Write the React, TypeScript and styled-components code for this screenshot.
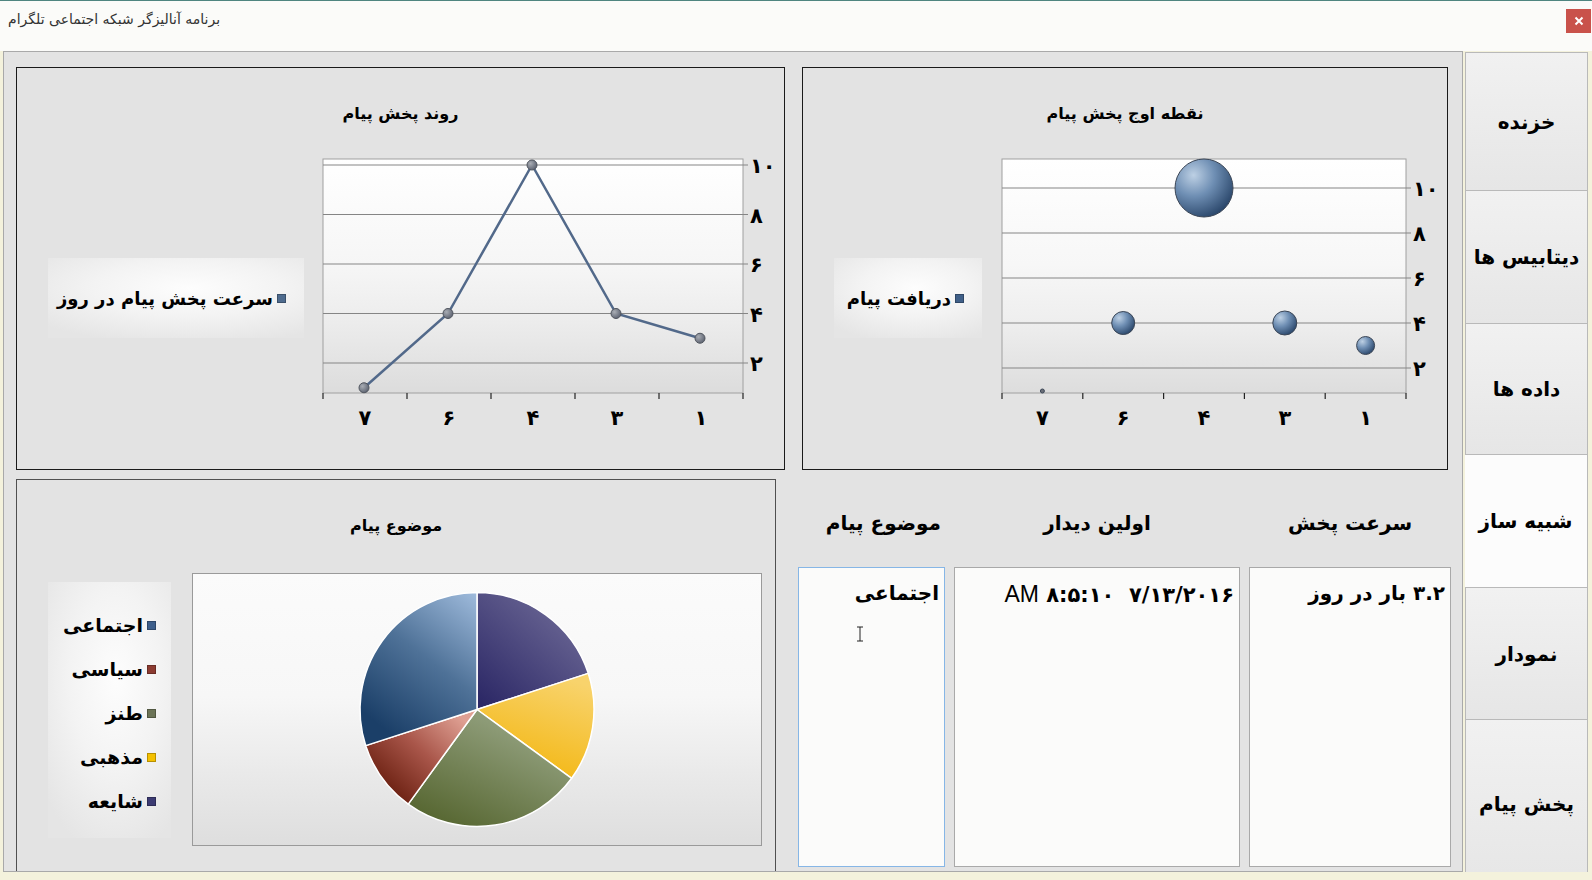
import React from "react";
import styled, { createGlobalStyle } from "styled-components";

const FA = `"DejaVu Sans", "Noto Sans", sans-serif`;

const Global = createGlobalStyle`
  html, body { margin: 0; padding: 0; width: 1592px; height: 880px; overflow: hidden; background: #f4f2dc; }
  #root { width: 1592px; height: 880px; }
`;

const Window = styled.div`
  width: 1592px;
  height: 880px;
  box-sizing: border-box;
  display: flex;
  flex-direction: column;
  background: #f4f2dc;
  border-top: 1px solid #4f8580;
`;

const TitleBar = styled.div`
  height: 50px;
  flex: none;
  background: #fbfbf9;
  display: flex;
  justify-content: space-between;
  align-items: flex-start;
  box-sizing: border-box;
  padding: 0 1px 0 8px;
`;

const Title = styled.div`
  font-family: ${FA};
  font-size: 14px;
  color: #333;
  margin-top: 10px;
  direction: rtl;
`;

const CloseBtn = styled.div`
  width: 25px;
  height: 24px;
  margin-top: 8px;
  background: #c9524b;
  display: flex;
  align-items: center;
  justify-content: center;
`;

const Body = styled.div`
  flex: 1;
  display: flex;
  padding: 0 0 8px 3px;
  min-height: 0;
`;

const Page = styled.div`
  width: 1460px;
  flex: none;
  box-sizing: border-box;
  border: 1px solid #a9a9a9;
  background: #e3e3e3;
  padding: 15px 0 0 12px;
  overflow: hidden;
  display: flex;
  flex-direction: column;
  position: relative;
`;

const TabStrip = styled.div`
  width: 123px;
  margin-left: 2px;
  padding-top: 2px;
  display: flex;
  flex-direction: column;
  overflow: hidden;
`;

const Tab = styled.div<{ h: number; active?: boolean }>`
  height: ${(p) => p.h}px;
  flex: none;
  box-sizing: border-box;
  border: 1px solid #b9b9b9;
  margin-top: -1px;
  margin-left: ${(p) => (p.active ? -2 : 0)}px;
  background: ${(p) => (p.active ? "#fcfcfc" : "linear-gradient(180deg, #f1f1f1 0%, #e6e6e6 100%)")};
  display: flex;
  align-items: center;
  justify-content: center;
  font-family: ${FA};
  font-weight: bold;
  font-size: 20px;
  color: #000;
  direction: rtl;
  position: relative;
  z-index: ${(p) => (p.active ? 2 : 1)};
`;

const Row = styled.div<{ gap: number; mt?: number }>`
  display: flex;
  gap: ${(p) => p.gap}px;
  margin-top: ${(p) => p.mt ?? 0}px;
  flex: none;
`;

const ChartPanel = styled.div<{ w: number; h: number; dim?: boolean }>`
  width: ${(p) => p.w}px;
  height: ${(p) => p.h}px;
  flex: none;
  box-sizing: border-box;
  border: 1px solid ${(p) => (p.dim ? "#505050" : "#1a1a1a")};
  background: #e3e3e3;
  display: flex;
  flex-direction: column;
`;

const ChartTitle = styled.div`
  height: 82px;
  box-sizing: border-box;
  padding-top: 8px;
  display: flex;
  align-items: center;
  justify-content: center;
  font-family: ${FA};
  font-weight: bold;
  font-size: 16px;
  color: #000;
  direction: rtl;
  flex: none;
`;

const ChartBody = styled.div`
  display: flex;
  align-items: flex-start;
  padding-left: 31px;
`;

const Legend = styled.div<{ w: number; h: number; top: number }>`
  width: ${(p) => p.w}px;
  height: ${(p) => p.h}px;
  margin-top: ${(p) => p.top}px;
  flex: none;
  box-sizing: border-box;
  background: radial-gradient(ellipse 75% 70% at 55% 38%, #fdfdfd 0%, #f3f3f3 50%, #e5e5e5 100%);
`;

const SeriesLegend = styled(Legend)`
  display: flex;
  direction: rtl;
  align-items: center;
  padding-right: 18px;
  font-family: ${FA};
  font-weight: bold;
  font-size: 18px;
  color: #000;
  white-space: nowrap;
`;

const Marker = styled.span<{ c: string }>`
  display: inline-block;
  width: 7px;
  height: 7px;
  flex: none;
  margin-left: 4px;
  background: ${(p) => p.c};
  border: 1px solid rgba(0, 0, 0, 0.25);
  box-sizing: content-box;
`;

const PieLegend = styled(Legend)`
  display: flex;
  flex-direction: column;
  padding-top: 21px;
`;

const PieItem = styled.div`
  height: 44px;
  display: flex;
  direction: rtl;
  align-items: center;
  padding-right: 15px;
  font-family: ${FA};
  font-weight: bold;
  font-size: 19px;
  color: #000;
  white-space: nowrap;
`;

const Plot = styled.svg<{ ml: number }>`
  display: block;
  flex: none;
  margin-left: ${(p) => p.ml}px;
  overflow: visible;
`;

const PiePlot = styled.div`
  width: 570px;
  height: 273px;
  margin-left: 21px;
  margin-top: 11px;
  box-sizing: border-box;
  border: 1px solid #9a9a9a;
  background: linear-gradient(180deg, #fbfbfb 0%, #f7f7f7 45%, #e9e9e9 75%, #dedede 100%);
  flex: none;
`;

const Info = styled.div`
  display: flex;
  gap: 9px;
  margin-left: 22px;
`;

const InfoCol = styled.div<{ w: number }>`
  width: ${(p) => p.w}px;
  display: flex;
  flex-direction: column;
  flex: none;
`;

const InfoHead = styled.div<{ right?: boolean }>`
  height: 88px;
  display: flex;
  align-items: center;
  justify-content: ${(p) => (p.right ? "flex-start" : "center")};
  padding-right: ${(p) => (p.right ? 4 : 0)}px;
  direction: rtl;
  white-space: nowrap;
  font-family: ${FA};
  font-weight: bold;
  font-size: 20px;
  color: #000;
`;

const InfoBox = styled.div<{ focused?: boolean }>`
  height: 300px;
  box-sizing: border-box;
  border: 1px solid ${(p) => (p.focused ? "#86b6e6" : "#a9a9a9")};
  background: #fbfbfa;
  padding: 13px 5px 0 5px;
  direction: rtl;
  text-align: right;
  font-family: ${FA};
  font-weight: bold;
  font-size: 20px;
  color: #000;
  position: relative;
  white-space: nowrap;
`;

const Ltr = styled.span`
  direction: ltr;
  unicode-bidi: isolate;
  display: inline-block;
  font-size: 21px;
`;

const Am = styled.span`
  font-family: "Liberation Sans", sans-serif;
  font-weight: normal;
  font-size: 23px;
`;

const Cursor = styled.svg`
  position: absolute;
  left: 57px;
  top: 58px;
`;

const axisText = {
  fontFamily: FA,
  fontWeight: 700,
  fontSize: 21,
} as const;

const yLabels = ["۱۰", "۸", "۶", "۴", "۲"];

function LineChart() {
  const y = (v: number) => 165 + (10 - v) * 24.75;
  const x0 = 323;
  const bw = 84;
  const cats = ["۷", "۶", "۴", "۳", "۱"];
  const vals = [1, 4, 10, 4, 3];
  const pts = vals.map((v, i) => [x0 + bw * i + bw / 2 - 1, y(v)]);
  return (
    <Plot ml={14} width={462} height={290} viewBox="318 150 462 290">
      <defs>
        <linearGradient id="lbg" x1="0" y1="0" x2="0" y2="1">
          <stop offset="0" stopColor="#ffffff" />
          <stop offset="0.45" stopColor="#f6f6f6" />
          <stop offset="0.7" stopColor="#ececec" />
          <stop offset="1" stopColor="#dcdcdc" />
        </linearGradient>
        <radialGradient id="ldot" cx="0.35" cy="0.35" r="0.7">
          <stop offset="0" stopColor="#a9adb4" />
          <stop offset="1" stopColor="#5c6270" />
        </radialGradient>
      </defs>
      <rect x={323} y={159} width={420} height={234} fill="url(#lbg)" stroke="#a0a0a0" />
      {[10, 8, 6, 4, 2].map((v, i) => (
        <g key={v}>
          <line x1={323} x2={748} y1={y(v)} y2={y(v)} stroke="#858585" strokeWidth={1.2} />
          <text x={750} y={y(v) + 1} dominantBaseline="central" {...axisText}>
            {yLabels[i]}
          </text>
        </g>
      ))}
      {[0, 1, 2, 3, 4, 5].map((i) => (
        <line key={i} x1={x0 + bw * i} x2={x0 + bw * i} y1={393} y2={399} stroke="#222" strokeWidth={1.2} />
      ))}
      {cats.map((c, i) => (
        <text key={i} x={x0 + bw * i + bw / 2} y={418} textAnchor="middle" dominantBaseline="central" {...axisText}>
          {c}
        </text>
      ))}
      <polyline points={pts.map((p) => p.join(",")).join(" ")} fill="none" stroke="#52698a" strokeWidth={2.5} />
      {pts.map((p, i) => (
        <circle key={i} cx={p[0]} cy={p[1]} r={5} fill="url(#ldot)" stroke="#50555e" strokeWidth={1} />
      ))}
    </Plot>
  );
}

function BubbleChart() {
  const y = (v: number) => 188 + (10 - v) * 22.5;
  const x0 = 1003;
  const bw = 80.8;
  const cats = ["۷", "۶", "۴", "۳", "۱"];
  const bubbles = [
    { i: 0, cy: 391, r: 2 },
    { i: 1, cy: y(4), r: 11.5 },
    { i: 2, cy: y(10), r: 29 },
    { i: 3, cy: y(4), r: 12 },
    { i: 4, cy: y(3), r: 9 },
  ];
  return (
    <Plot ml={15} width={446} height={290} viewBox="998 150 446 290">
      <defs>
        <linearGradient id="bbg" x1="0" y1="0" x2="0" y2="1">
          <stop offset="0" stopColor="#ffffff" />
          <stop offset="0.45" stopColor="#f7f7f7" />
          <stop offset="0.7" stopColor="#eeeeee" />
          <stop offset="1" stopColor="#dddddd" />
        </linearGradient>
        <radialGradient id="bub" cx="0.32" cy="0.28" r="0.8">
          <stop offset="0" stopColor="#bdd0e4" />
          <stop offset="0.45" stopColor="#6f8fb4" />
          <stop offset="1" stopColor="#264266" />
        </radialGradient>
      </defs>
      <rect x={1003} y={159} width={404} height={234} fill="url(#bbg)" stroke="#a0a0a0" />
      {[10, 8, 6, 4, 2].map((v, i) => (
        <g key={v}>
          <line x1={1003} x2={1412} y1={y(v)} y2={y(v)} stroke="#858585" strokeWidth={1.2} />
          <text x={1414} y={y(v) + 1} dominantBaseline="central" {...axisText}>
            {yLabels[i]}
          </text>
        </g>
      ))}
      {[0, 1, 2, 3, 4, 5].map((i) => (
        <line key={i} x1={x0 + bw * i} x2={x0 + bw * i} y1={393} y2={399} stroke="#222" strokeWidth={1.2} />
      ))}
      {cats.map((c, i) => (
        <text key={i} x={x0 + bw * i + bw / 2} y={418} textAnchor="middle" dominantBaseline="central" {...axisText}>
          {c}
        </text>
      ))}
      {bubbles.map((b) => (
        <circle
          key={b.i}
          cx={x0 + bw * b.i + bw / 2}
          cy={b.cy}
          r={b.r}
          fill={b.r < 3 ? "#6b6f78" : "url(#bub)"}
          stroke="#3b4656"
          strokeWidth={1}
        />
      ))}
    </Plot>
  );
}

const slices = [
  { a0: 0, a1: 72, g: "sPurple" },
  { a0: 72, a1: 126, g: "sYellow" },
  { a0: 126, a1: 216, g: "sGreen" },
  { a0: 216, a1: 252, g: "sRed" },
  { a0: 252, a1: 360, g: "sBlue" },
];

function PieChart() {
  const cx = 284;
  const cy = 135.5;
  const r = 117;
  const pt = (a: number) => {
    const rad = (a * Math.PI) / 180;
    return [cx + r * Math.sin(rad), cy - r * Math.cos(rad)];
  };
  return (
    <svg width={568} height={271} viewBox="0 0 568 271" style={{ display: "block" }}>
      <defs>
        <linearGradient id="sPurple" gradientUnits="userSpaceOnUse" x1={380} y1={30} x2={290} y2={130}>
          <stop offset="0" stopColor="#6e6a97" />
          <stop offset="1" stopColor="#2c2866" />
        </linearGradient>
        <linearGradient id="sYellow" gradientUnits="userSpaceOnUse" x1={390} y1={110} x2={350} y2={230}>
          <stop offset="0" stopColor="#f8d36c" />
          <stop offset="1" stopColor="#f2b100" />
        </linearGradient>
        <linearGradient id="sGreen" gradientUnits="userSpaceOnUse" x1={300} y1={150} x2={250} y2={255}>
          <stop offset="0" stopColor="#8d9b77" />
          <stop offset="1" stopColor="#55652f" />
        </linearGradient>
        <linearGradient id="sRed" gradientUnits="userSpaceOnUse" x1={270} y1={145} x2={200} y2={220}>
          <stop offset="0" stopColor="#dfa093" />
          <stop offset="0.5" stopColor="#a9564a" />
          <stop offset="1" stopColor="#6d2213" />
        </linearGradient>
        <linearGradient id="sBlue" gradientUnits="userSpaceOnUse" x1={285} y1={20} x2={185} y2={150}>
          <stop offset="0" stopColor="#9fbbdc" />
          <stop offset="0.5" stopColor="#4f7298" />
          <stop offset="1" stopColor="#1b3f68" />
        </linearGradient>
      </defs>
      {slices.map((s) => {
        const [x1, y1] = pt(s.a0);
        const [x2, y2] = pt(s.a1);
        const large = s.a1 - s.a0 > 180 ? 1 : 0;
        return (
          <path
            key={s.g}
            d={`M ${cx} ${cy} L ${x1} ${y1} A ${r} ${r} 0 ${large} 1 ${x2} ${y2} Z`}
            fill={`url(#${s.g})`}
            stroke="#ffffff"
            strokeWidth={1.5}
            strokeLinejoin="round"
          />
        );
      })}
    </svg>
  );
}

const pieLegend = [
  { t: "اجتماعی", c: "#3d5e8b" },
  { t: "سیاسی", c: "#8c3b31" },
  { t: "طنز", c: "#6c7457" },
  { t: "مذهبی", c: "#f4c000" },
  { t: "شایعه", c: "#3c3b73" },
];

const tabs = [
  { t: "خزنده", h: 139 },
  { t: "دیتابیس ها", h: 134 },
  { t: "داده ها", h: 132 },
  { t: "شبیه ساز", h: 134, active: true },
  { t: "نمودار", h: 133 },
  { t: "پخش پیام", h: 170 },
];

export default function App() {
  return (
    <>
      <Global />
      <Window>
        <TitleBar>
          <Title>برنامه آنالیزگر شبکه اجتماعی تلگرام</Title>
          <CloseBtn>
            <svg width="10" height="10" viewBox="0 0 10 10">
              <path d="M1.5 1.5 L8.5 8.5 M8.5 1.5 L1.5 8.5" stroke="#fff" strokeWidth="2" />
            </svg>
          </CloseBtn>
        </TitleBar>
        <Body>
          <Page>
            <Row gap={17}>
              <ChartPanel w={769} h={403}>
                <ChartTitle>روند پخش پیام</ChartTitle>
                <ChartBody>
                  <SeriesLegend w={256} h={80} top={108}>
                    <Marker c="#4e6b8e" />
                    سرعت پخش پیام در روز
                  </SeriesLegend>
                  <LineChart />
                </ChartBody>
              </ChartPanel>
              <ChartPanel w={646} h={403}>
                <ChartTitle>نقطه اوج پخش پیام</ChartTitle>
                <ChartBody>
                  <SeriesLegend w={148} h={80} top={108}>
                    <Marker c="#3f5f88" />
                    دریافت پیام
                  </SeriesLegend>
                  <BubbleChart />
                </ChartBody>
              </ChartPanel>
            </Row>
            <Row gap={0} mt={9}>
              <ChartPanel w={760} h={400} dim>
                <ChartTitle>موضوع پیام</ChartTitle>
                <ChartBody>
                  <PieLegend w={123} h={256} top={20}>
                    {pieLegend.map((l) => (
                      <PieItem key={l.t}>
                        <Marker c={l.c} />
                        {l.t}
                      </PieItem>
                    ))}
                  </PieLegend>
                  <PiePlot>
                    <PieChart />
                  </PiePlot>
                </ChartBody>
              </ChartPanel>
              <Info>
                <InfoCol w={147}>
                  <InfoHead right>موضوع پیام</InfoHead>
                  <InfoBox focused>
                    اجتماعی
                    <Cursor width="8" height="16" viewBox="0 0 8 16">
                      <path d="M1 1 H7 M4 1 V15 M1 15 H7" stroke="#222" strokeWidth="1" fill="none" />
                    </Cursor>
                  </InfoBox>
                </InfoCol>
                <InfoCol w={286}>
                  <InfoHead>اولین دیدار</InfoHead>
                  <InfoBox>
                    <Ltr>
                      <Am>AM</Am> ۸:۵:۱۰&nbsp;&nbsp;۷/۱۳/۲۰۱۶
                    </Ltr>
                  </InfoBox>
                </InfoCol>
                <InfoCol w={202}>
                  <InfoHead>سرعت پخش</InfoHead>
                  <InfoBox>۳.۲ بار در روز</InfoBox>
                </InfoCol>
              </Info>
            </Row>
          </Page>
          <TabStrip>
            {tabs.map((t) => (
              <Tab key={t.t} h={t.h} active={t.active}>
                {t.t}
              </Tab>
            ))}
          </TabStrip>
        </Body>
      </Window>
    </>
  );
}
